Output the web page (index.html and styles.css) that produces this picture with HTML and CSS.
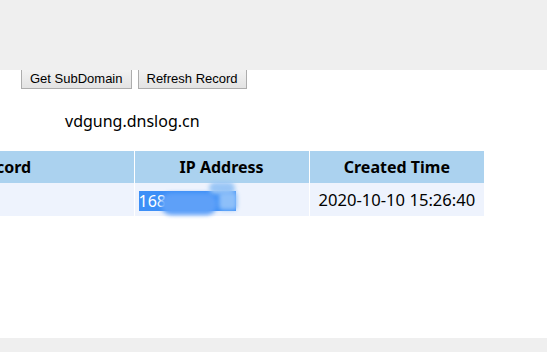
FILE: index.html
```html
<!DOCTYPE html>
<html lang="en">
<head>
    <meta charset="UTF-8">
    <meta name="viewport" content="width=device-width, initial-scale=1.0">
    <title>DNSLog Platform</title>
    <link rel="stylesheet" href="styles.css">
</head>
<body>

    <div class="top-bar"></div>

    <div class="main">
        <!-- Actions -->
        <div class="actions">
            <button class="btn">Get SubDomain</button>
            <button class="btn">Refresh Record</button>
        </div>

        <div class="domain">vdgung.dnslog.cn</div>

        <!-- Records -->
        <div class="records-wrap">
            <table class="records">
                <tr>
                    <th class="col-record">DNS Query Record</th>
                    <th>IP Address</th>
                    <th>Created Time</th>
                </tr>
                <tr>
                    <td class="col-record"></td>
                    <td class="ip-cell">
                        <span class="ip-select">168<span class="blur b1"></span><span class="blur b2"></span><span class="blur b3"></span></span>
                    </td>
                    <td class="time-cell">2020-10-10 15:26:40</td>
                </tr>
            </table>
        </div>
    </div>

    <div class="bottom-bar"></div>

</body>
</html>
```

FILE: styles.css
```css
/* General Styling */
body {
    margin: 0;
    height: 100vh;
    display: flex;
    flex-direction: column;
    overflow: hidden;
    background: #ffffff;
    font-family: "Noto Sans", "Open Sans", sans-serif;
    color: #000;
}

.top-bar {
    height: 70px;
    background: #efefef;
    flex-shrink: 0;
}

.main {
    flex: 1;
}

.bottom-bar {
    height: 14px;
    background: #efefef;
    flex-shrink: 0;
}

/* Buttons */
.actions {
    display: flex;
    gap: 6px;
    padding-left: 21px;
}

.btn {
    height: 19px;
    padding: 0 8px;
    font-family: "Liberation Sans", Arial, sans-serif;
    font-size: 13px;
    color: #000;
    background: linear-gradient(#f2f2f2, #e3e3e3);
    border: 1px solid #adadad;
    border-top: none;
    border-radius: 0;
    line-height: 18px;
}

/* Domain */
.domain {
    margin: 22px 0 0 65px;
    font-size: 16px;
    line-height: 20px;
}

/* Table */
.records-wrap {
    margin: 20px 0 0 -218px;
}

.records {
    border-collapse: separate;
    border-spacing: 1px 0;
    width: 703px;
}

.records th {
    background: #abd2ef;
    height: 32px;
    padding: 0;
    font-size: 16px;
    font-weight: bold;
    text-align: center;
    width: 174px;
}

.records th.col-record,
.records td.col-record {
    width: 350px;
}

.records td {
    background: #eef3fd;
    height: 33px;
    padding: 0;
    font-size: 16px;
    text-align: center;
}

.records td.time-cell {
    font-size: 16.6px;
}

.ip-cell {
    text-align: left !important;
    padding-left: 4px !important;
}

.ip-select {
    position: relative;
    display: inline-block;
    width: 97px;
    height: 20px;
    line-height: 20px;
    background: #3d8ff7;
    color: #fff;
    vertical-align: middle;
}

.blur {
    position: absolute;
    filter: blur(2px);
}

.b1 {
    left: 22px;
    top: 2px;
    width: 56px;
    height: 22px;
    border-radius: 10px;
    background: #5ea0f8;
}

.b2 {
    left: 70px;
    top: -9px;
    width: 26px;
    height: 12px;
    border-radius: 6px;
    background: #9ac6f6;
}

.b3 {
    left: 80px;
    top: 1px;
    width: 18px;
    height: 18px;
    border-radius: 4px;
    background: #8dbff9;
}
```
